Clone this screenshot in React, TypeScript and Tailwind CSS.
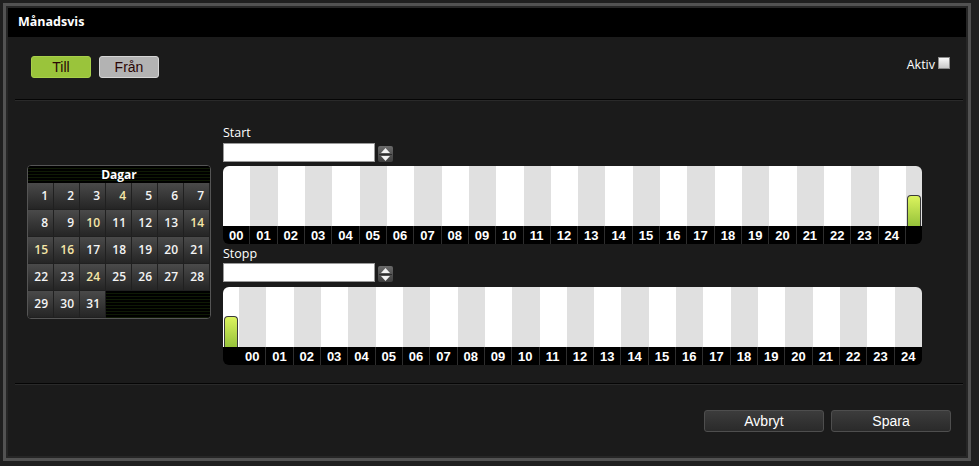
import React from "react";

const hours = Array.from({ length: 25 }, (_, i) => String(i).padStart(2, "0"));
const yellow = new Set([4, 10, 14, 15, 16, 24]);

function Spinner() {
  return (
    <div className="w-[15px] h-[16px] rounded-[2px] bg-gradient-to-b from-[#6a6a6a] to-[#3e3e3e] flex flex-col items-center justify-center gap-[1px]">
      <svg width="9" height="5" viewBox="0 0 9 5">
        <path d="M4.5 0 L9 5 L0 5 Z" fill="#f2f2f2" />
      </svg>
      <div className="w-[13px] h-px bg-[#2c2c2c]" />
      <svg width="9" height="5" viewBox="0 0 9 5">
        <path d="M0 0 L9 0 L4.5 5 Z" fill="#f2f2f2" />
      </svg>
    </div>
  );
}

function Handle() {
  return (
    <div className="w-[14px] h-[31px] rounded-t-[4px] border border-[#3a3a3a] border-b-0 bg-gradient-to-b from-[#dcf45e] to-[#96c23a]" />
  );
}

function Timeline({ handleFirst }: { handleFirst: boolean }) {
  const cols = handleFirst ? ["H", ...hours] : [...hours, "H"];
  const grid = handleFirst
    ? "grid grid-cols-[16px_repeat(25,1fr)]"
    : "grid grid-cols-[repeat(25,1fr)_16px]";
  return (
    <div className="w-[699px] rounded-[6px] overflow-hidden">
      <div className={`${grid} h-[60px]`}>
        {cols.map((c, i) => (
          <div
            key={i}
            className={`${i % 2 === 0 ? "bg-white" : "bg-[#e0e0e0]"} flex items-end justify-center`}
          >
            {c === "H" && <Handle />}
          </div>
        ))}
      </div>
      <div className={`${grid} h-[18px] bg-black`}>
        {cols.map((c, i) => (
          <div
            key={i}
            className={`flex items-center justify-center text-white font-bold text-[13px] leading-none font-['Liberation_Sans',Arial,sans-serif] ${
              c === "H" || i === cols.length - 1 ? "" : "border-r border-[#2e2e2e]"
            }`}
          >
            {c === "H" ? "" : c}
          </div>
        ))}
      </div>
    </div>
  );
}

function Calendar() {
  const days = Array.from({ length: 31 }, (_, i) => i + 1);
  const stripes =
    "bg-[repeating-linear-gradient(180deg,#000_0px,#000_2px,#0f1a05_2px,#0f1a05_3px)]";
  return (
    <div className="w-[184px] border border-[#555] rounded-[4px] overflow-hidden bg-black">
      <div
        className={`h-[17px] ${stripes} flex items-center justify-center text-white font-bold text-[12px] font-['Open_Sans',sans-serif]`}
      >
        Dagar
      </div>
      <div className="grid grid-cols-[repeat(7,26px)]">
        {days.map((d) => (
          <div
            key={d}
            className={`h-[27px] border-r border-b border-[#202020] bg-gradient-to-b from-[#4a4a4a] to-[#252525] flex items-center justify-end pr-[5px] text-[12px] font-semibold font-['Open_Sans',sans-serif] ${
              yellow.has(d) ? "text-[#f6e6a8]" : "text-[#f4f4f4]"
            }`}
          >
            {d}
          </div>
        ))}
        <div className={`col-span-4 h-[27px] ${stripes}`} />
      </div>
    </div>
  );
}

export default function App() {
  return (
    <div className="w-[979px] h-[466px] bg-[#1f1f1f] pl-[3px] pt-[3px] pr-[8px] pb-[5px]">
      <div className="w-full h-full border-[3px] border-[#525252] p-[2px] bg-[#262626]">
        <div className="w-full h-full flex flex-col bg-[#1b1b1b]">
          <div className="h-[29px] bg-black flex items-center pl-[10px] text-white font-bold text-[12.5px] font-['Open_Sans',sans-serif]">
            Månadsvis
          </div>
          <div className="flex-1 flex flex-col">
            <div className="flex items-start justify-between pt-[19px] pl-[23px] pr-[16px]">
              <div className="flex gap-[8px]">
                <button className="w-[60px] h-[22px] rounded-[3px] bg-[#9ac43b] border border-[#a8d04a] text-[#2a0505] text-[14px] font-['Liberation_Sans',Arial,sans-serif] leading-none">
                  Till
                </button>
                <button className="w-[60px] h-[22px] rounded-[3px] bg-[#b3b3b3] border border-[#d6d6d6] text-[#2a0505] text-[14px] font-['Liberation_Sans',Arial,sans-serif] leading-none">
                  Från
                </button>
              </div>
              <div className="flex items-start gap-[3px] pt-[1px]">
                <span className="text-white text-[12.5px] leading-[14px] mt-[1px] font-['Open_Sans',sans-serif]">
                  Aktiv
                </span>
                <div className="w-[12px] h-[12px] border border-[#8a8a8a] bg-gradient-to-b from-[#fafafa] to-[#c8c8c8]" />
              </div>
            </div>
            <div className="ml-[7px] mr-[3px] mt-[21px] h-[2px] border-t border-[#050505] border-b border-b-[#2a2a2a]" />
            <div className="flex pl-[19px] pt-[24px]">
              <div className="mt-[40px]">
                <Calendar />
              </div>
              <div className="ml-[12px] flex flex-col">
                <div className="text-white text-[12.5px] leading-[16px] font-['Open_Sans',sans-serif]">
                  Start
                </div>
                <div className="flex items-end gap-[3px] mt-[2px]">
                  <div className="w-[152px] h-[19px] bg-white border border-[#9a9a9a]" />
                  <Spinner />
                </div>
                <div className="mt-[4px]">
                  <Timeline handleFirst={false} />
                </div>
                <div className="text-white text-[12.5px] leading-[16px] mt-[2px] font-['Open_Sans',sans-serif]">
                  Stopp
                </div>
                <div className="flex items-end gap-[3px] mt-[1px]">
                  <div className="w-[152px] h-[19px] bg-white border border-[#9a9a9a]" />
                  <Spinner />
                </div>
                <div className="mt-[5px]">
                  <Timeline handleFirst={true} />
                </div>
              </div>
            </div>
            <div className="ml-[7px] mr-[3px] mt-[18px] h-[2px] border-t border-[#050505] border-b border-b-[#2a2a2a]" />
            <div className="flex justify-end gap-[7px] pr-[15px] mt-[25px]">
              <button className="w-[120px] h-[22px] rounded-[3px] border border-[#4e4e4e] bg-gradient-to-b from-[#3c3c3c] to-[#2a2a2a] text-white text-[14px] leading-none font-['Liberation_Sans',Arial,sans-serif]">
                Avbryt
              </button>
              <button className="w-[120px] h-[22px] rounded-[3px] border border-[#4e4e4e] bg-gradient-to-b from-[#3c3c3c] to-[#2a2a2a] text-white text-[14px] leading-none font-['Liberation_Sans',Arial,sans-serif]">
                Spara
              </button>
            </div>
          </div>
        </div>
      </div>
    </div>
  );
}
